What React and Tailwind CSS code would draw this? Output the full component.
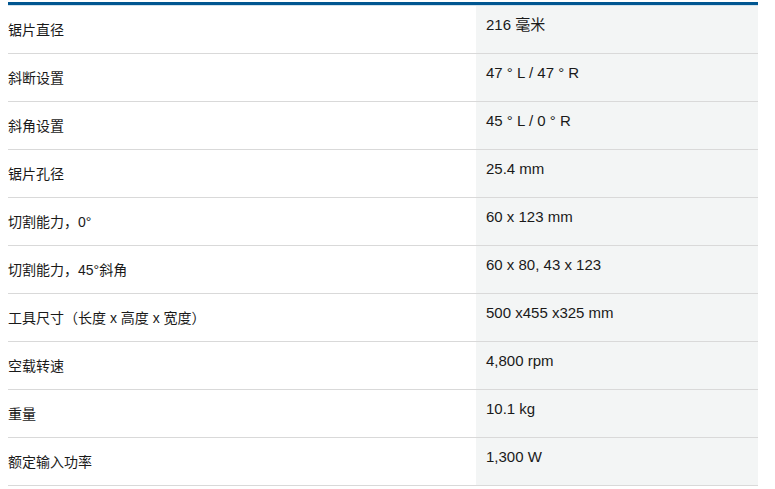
import React from "react";

const rows = [
  ["锯片直径", "216 毫米"],
  ["斜断设置", "47 ° L / 47 ° R"],
  ["斜角设置", "45 ° L / 0 ° R"],
  ["锯片孔径", "25.4 mm"],
  ["切割能力，0°", "60 x 123 mm"],
  ["切割能力，45°斜角", "60 x 80, 43 x 123"],
  ["工具尺寸（长度 x 高度 x 宽度）", "500 x455 x325 mm"],
  ["空载转速", "4,800 rpm"],
  ["重量", "10.1 kg"],
  ["额定输入功率", "1,300 W"],
];

export default function App() {
  return (
    <div
      className="bg-white w-[775px] h-[489px] pt-[2px] pl-[8px] text-[14px] text-[#1a1a1a]"
      style={{ fontFamily: '"Liberation Sans", Arial, "Noto Sans CJK SC", sans-serif' }}
    >
      <div className="w-[750px] border-t-[3px] border-[#005691]">
        <div className="h-[1px] bg-[#d3e2ec]" />
        {rows.map(([k, v], i) => (
          <div key={i} className="flex h-[48px] border-b border-[#d9d9d9]">
            <div className="w-[468px] flex items-center leading-5">{k}</div>
            <div className="flex-1 bg-[#f3f5f5] pl-[10px] pt-[9px] leading-5 text-[15px]">{v}</div>
          </div>
        ))}
      </div>
    </div>
  );
}
